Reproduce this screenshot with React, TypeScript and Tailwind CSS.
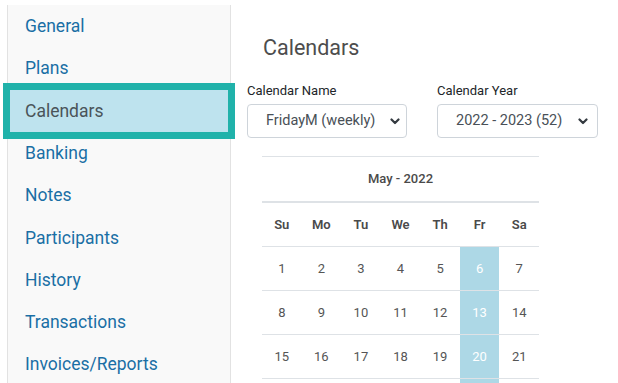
import React from 'react';

const navItems = ['General', 'Plans', 'Calendars', 'Banking', 'Notes', 'Participants', 'History', 'Transactions', 'Invoices/Reports'];
const days = ['Su', 'Mo', 'Tu', 'We', 'Th', 'Fr', 'Sa'];
const weeks = [
    [1, 2, 3, 4, 5, 6, 7],
    [8, 9, 10, 11, 12, 13, 14],
    [15, 16, 17, 18, 19, 20, 21],
];

const Chevron: React.FC = () => (
    <svg width="10" height="7" viewBox="0 0 10 7" className="shrink-0">
        <polyline points="1.5,1.5 5,5 8.5,1.5" fill="none" stroke="#343a40" strokeWidth="2.2" strokeLinecap="round" strokeLinejoin="round" />
    </svg>
);

const FakeSelect: React.FC<{ value: string; width: string; pr: string }> = ({ value, width, pr }) => (
    <div className={`${width} ${pr} h-[34px] flex items-center justify-between pl-[18px] border border-[#ced4da] rounded-[4px] bg-white text-[14.5px] text-[#495057]`}>
        <span>{value}</span>
        <Chevron />
    </div>
);

const App: React.FC = () => {
    return (
        <div className="flex h-[383px] overflow-hidden bg-white font-['Roboto',sans-serif]">
            {/* Sidebar */}
            <div className="pl-[7px] pt-[5px] shrink-0">
                <div className="w-[224px] h-full border-l border-r border-[#e2e2e2] bg-[#f9f9f9]">
                    {navItems.map((item) =>
                        item === 'Calendars' ? (
                            <div
                                key={item}
                                className="relative z-10 mx-[2px] h-[42.3px] flex items-center pl-[15px] bg-[#bee3ee] outline-solid outline-[7px] outline-[#20b2aa] text-[17.5px] text-[#4a5459]"
                            >
                                {item}
                            </div>
                        ) : (
                            <div key={item} className="mx-[2px] h-[42.3px] flex items-center pl-[15px] text-[17.5px] text-[#1a6fa5]">
                                {item}
                            </div>
                        )
                    )}
                </div>
            </div>

            {/* Main */}
            <div className="ml-[16px] pt-[35px] flex flex-col">
                <h1 className="pl-[16px] text-[21.5px] leading-[26px] text-[#4d4d4d]">Calendars</h1>

                <div className="mt-[22px] flex gap-[30px]">
                    <div className="flex flex-col">
                        <label className="text-[13px] leading-[16px] text-[#212529] mb-[5px]">Calendar Name</label>
                        <FakeSelect value="FridayM (weekly)" width="w-[160px]" pr="pr-[6px]" />
                    </div>
                    <div className="flex flex-col">
                        <label className="text-[13px] leading-[16px] text-[#212529] mb-[5px]">Calendar Year</label>
                        <FakeSelect value="2022 - 2023 (52)" width="w-[161px]" pr="pr-[9px]" />
                    </div>
                </div>

                {/* Calendar */}
                <div className="mt-[18px] ml-[15px] w-[277px] text-[13px] text-[#555]">
                    <div className="h-[47px] border-t border-b-2 border-[#dee2e6] flex items-center justify-center font-medium text-[#4a4a4a]">
                        May - 2022
                    </div>
                    <div className="h-[44px] border-b border-[#dee2e6] grid grid-cols-7 font-semibold text-[#4a4a4a]">
                        {days.map((d) => (
                            <div key={d} className="flex items-center justify-center">{d}</div>
                        ))}
                    </div>
                    {weeks.map((week, i) => (
                        <div key={i} className="h-[44px] border-b border-[#dee2e6] grid grid-cols-7">
                            {week.map((n, j) => (
                                <div
                                    key={n}
                                    className={j === 5 ? 'flex items-center justify-center bg-[#add8e6] text-white' : 'flex items-center justify-center'}
                                >
                                    {n}
                                </div>
                            ))}
                        </div>
                    ))}
                    {/* next week, only its top edge is in view */}
                    <div className="h-[44px] grid grid-cols-7">
                        {days.map((d, j) => (
                            <div key={d} className={j === 5 ? 'bg-[#add8e6]' : ''} />
                        ))}
                    </div>
                </div>
            </div>
        </div>
    );
};

export default App;
